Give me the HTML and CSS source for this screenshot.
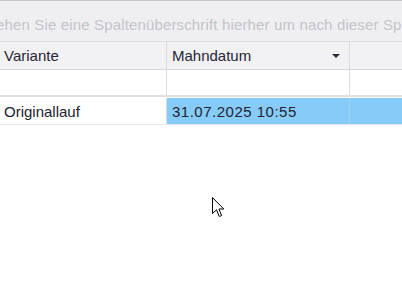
FILE: index.html
```html
<!DOCTYPE html>
<html>
<head>
    <title>Mahnläufe</title>
    <link rel="stylesheet" href="styles.css">
</head>
<body>
    <div class="grid">
        <!-- Group panel -->
        <div class="group-panel">ehen Sie eine Spaltenüberschrift hierher um nach dieser Spalte zu gruppieren</div>

        <!-- Column headers -->
        <div class="row header-row">
            <div class="cell col-1">Variante</div>
            <div class="cell col-2">Mahndatum <span class="sort-arrow"></span></div>
            <div class="cell col-3"></div>
        </div>

        <!-- Auto filter row -->
        <div class="row filter-row">
            <div class="cell col-1"></div>
            <div class="cell col-2"></div>
            <div class="cell col-3"></div>
        </div>

        <!-- Data -->
        <div class="row data-row">
            <div class="cell col-1">Originallauf</div>
            <div class="cell col-2 focused date">31.07.2025 10:55</div>
            <div class="cell col-3 focused"></div>
        </div>

        <div class="empty-area"></div>
    </div>

    <svg class="cursor" width="13" height="21" viewBox="0 0 13 21">
        <path d="M0.5 0.5 L0.5 16.5 L4.5 12.8 L7.3 19.5 L9.6 18.5 L6.9 12 L11.8 12 Z" fill="#fff" stroke="#000" stroke-width="1" stroke-linejoin="miter"/>
    </svg>
</body>
</html>
```

FILE: styles.css
```css
body {
    margin: 0;
    background: #ffffff;
    font-family: 'Liberation Sans', Arial, sans-serif;
    font-size: 15px;
    color: #222230;
    overflow: hidden;
}

.grid {
    display: flex;
    flex-direction: column;
    width: 402px;
}

.group-panel {
    height: 40px;
    line-height: 47px;
    background: #efeff2;
    border-top: 1px solid #c6c6cc;
    border-bottom: 1px solid #dcdce0;
    color: #c3c3ca;
    white-space: nowrap;
    overflow: hidden;
    text-indent: -4px;
    letter-spacing: 0.15px;
}

.row {
    display: flex;
}

.cell {
    box-sizing: border-box;
    padding-left: 4px;
    white-space: nowrap;
    overflow: hidden;
    border-right: 1px solid #dcdce0;
}

.col-1 {
    width: 167px;
}

.col-2 {
    width: 183px;
    padding-left: 5px;
}

.col-3 {
    flex: 1;
    border-right: none;
}

.header-row {
    height: 27px;
    background: #f2f2f4;
    border-bottom: 1px solid #d6d6da;
    line-height: 28px;
    color: #262636;
}

.header-row .col-2 {
    display: flex;
    align-items: center;
    justify-content: space-between;
    padding-right: 9px;
}

.sort-arrow {
    width: 0;
    height: 0;
    border-left: 4px solid transparent;
    border-right: 4px solid transparent;
    border-top: 4px solid #2b2b3a;
}

.filter-row {
    height: 25px;
    border-bottom: 2px solid #e0e0e4;
}

.data-row {
    height: 26px;
    margin-top: 1px;
    border-bottom: 1px solid #e4e4e8;
    line-height: 28px;
}

.focused {
    background: #87ccf9;
}

.date {
    letter-spacing: 0.5px;
}

.data-row .col-2 {
    border-right-color: #9fd3f5;
}

.empty-area {
    height: 170px;
}

.cursor {
    position: absolute;
    left: 212px;
    top: 197px;
}
```
